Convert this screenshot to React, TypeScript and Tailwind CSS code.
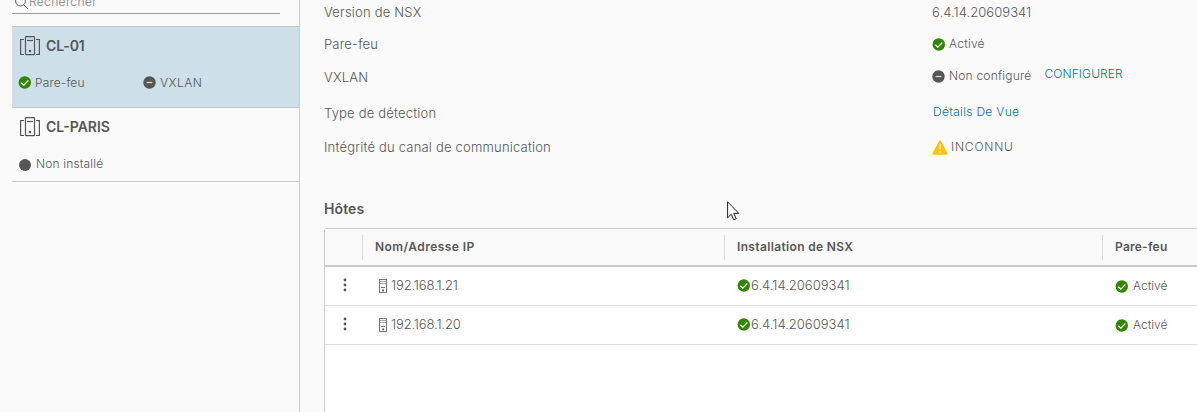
// Cluster list on the left, cluster details and host table on the right
const CheckIcon = ({ className = "" }: { className?: string }) => (
  <svg viewBox="0 0 13 13" className={`size-[13px] shrink-0 ${className}`}>
    <circle cx="6.8" cy="6.5" r="6.2" fill="#318700" />
    <path d="M3.3 6.7 5.8 9.1 10.4 4.5" fill="none" stroke="#fff" strokeWidth="1.25" />
  </svg>
);

const MinusIcon = ({ className = "" }: { className?: string }) => (
  <svg viewBox="0 0 13 13" className={`size-[13px] shrink-0 ${className}`}>
    <circle cx="6.5" cy="6.5" r="6.2" fill="#565656" />
    <path d="M3.6 6.5h5.8" stroke="#ddd" strokeWidth="1.2" />
  </svg>
);

const WarningIcon = () => (
  <svg viewBox="0 0 16 15" className="h-[15px] w-4 shrink-0">
    <path d="M8 1.6 14.6 13.8H1.4Z" fill="#ffc20e" stroke="#ffc20e" strokeWidth="2" strokeLinejoin="round" />
    <path d="M8 4.6v5M8 11v1.5" stroke="#fff" strokeWidth="1.3" />
  </svg>
);

const ClusterIcon = () => (
  <svg viewBox="0 0 20 20" className="size-5 shrink-0" fill="none" stroke="#565656" strokeWidth="1.2">
    <rect x="5.5" y=".6" width="9" height="18" rx="0.6" />
    <path d="M7 4.5h6" />
    <path d="M4 3.5H.6v15H4M16 3.5h3.4v15H16" />
    <path d="M8.9 15h2.2" strokeWidth="2.2" />
  </svg>
);

const HostIcon = () => (
  <svg viewBox="0 0 8 14" className="mt-[2px] h-[14px] w-2 shrink-0">
    <rect x=".5" y=".5" width="7" height="13" fill="#fff" stroke="#777" />
    <path d="M1 2.5h6M1 4.5h6" stroke="#aaa" />
    <path d="M2 8.5h4" stroke="#777" />
    <path d="M3.2 11.4h1.8" stroke="#555" strokeWidth="1.6" />
  </svg>
);

const hosts = [
  { ip: "192.168.1.21", version: "6.4.14.20609341" },
  { ip: "192.168.1.20", version: "6.4.14.20609341" },
];

const Sidebar = () => (
  <aside className="h-[412px] w-[300px] shrink-0 border-r border-[#ccc] pl-3">
    <div className="flex h-[14px] w-[268px] items-end border-b border-[#9a9a9a] pb-[3px] pl-[2px]">
      <svg viewBox="0 0 15 15" className="size-[15px] shrink-0" fill="none" stroke="#666" strokeWidth="1">
        <circle cx="6.5" cy="6" r="5" />
        <path d="m10 10 4 4" />
      </svg>
      <span className="text-[12px] leading-4 tracking-[0.35px] text-[#808080]">Rechercher</span>
    </div>

    <div className="mt-3 h-[82px] border-y border-[#c4cacd] bg-[#cddfe8] pl-2">
      <div className="flex h-[37px] items-center gap-[6px]">
        <ClusterIcon />
        <span className="text-[14px] font-semibold tracking-[-0.1px]">CL-01</span>
      </div>
      <div className="flex h-[37px] items-center">
        <div className="flex w-[124px] items-center gap-[3px]">
          <CheckIcon className="-ml-[2px]" />
          <span className="pl-px text-[12px] tracking-[0.15px]">Pare-feu</span>
        </div>
        <MinusIcon className="-ml-px" />
        <span className="ml-[4px] text-[12px] tracking-[0.5px]">VXLAN</span>
      </div>
    </div>

    <div className="h-[74px] border-b border-[#ccc] pl-2">
      <div className="flex h-[38px] items-center gap-[6px]">
        <ClusterIcon />
        <span className="text-[14px] font-semibold">CL-PARIS</span>
      </div>
      <div className="flex h-[35px] items-center gap-[5px]">
        <span className="mt-[2px] -ml-px size-[12px] rounded-full bg-[#565656]" />
        <span className="text-[12px] tracking-[0.15px]">Non installé</span>
      </div>
    </div>
  </aside>
);

const Details = () => (
  <section className="grid grid-cols-[608px_1fr] grid-rows-[24px_40px_26px_46px_22px] items-center text-[13px] tracking-[0.2px]">
    <span>Version de NSX</span>
    <span className="tracking-[0.05px]">6.4.14.20609341</span>

    <span className="pb-px">Pare-feu</span>
    <div className="flex items-center gap-1">
      <CheckIcon className="mt-px" />
      <span className="text-[12px]">Activé</span>
    </div>

    <span>VXLAN</span>
    <div className="flex items-center gap-1 pb-[3px]">
      <MinusIcon className="mt-[2px]" />
      <span className="text-[12px]">Non configuré</span>
      <a className="ml-[9px] pb-[3px] text-[12px] tracking-[0.1px] text-[#0072a3]">CONFIGURER</a>
    </div>

    <span>Type de détection</span>
    <a className="pb-[3px] pl-px text-[12px] tracking-[0.3px] text-[#0072a3]">Détails De Vue</a>

    <span>Intégrité du canal de communication</span>
    <div className="flex items-center gap-[3px]">
      <WarningIcon />
      <span className="text-[12px] tracking-[0.8px]">INCONNU</span>
    </div>
  </section>
);

const HostTable = () => (
  <div className="h-[184px] rounded-tl-[3px] border-t border-l border-[#ccc] bg-white">
    <div className="grid h-[38px] grid-cols-[38px_362px_378px_1fr] items-center border-b-2 border-[#ccc] bg-[#fafafa] text-[12px] font-semibold">
      <div className="h-[25px] border-r border-[#ddd]" />
      <div className="flex h-[25px] items-center border-r border-[#ddd] pl-3 tracking-[0.45px]">Nom/Adresse IP</div>
      <div className="flex h-[25px] items-center border-r border-[#ddd] pl-3 tracking-[0.35px]">Installation de NSX</div>
      <div className="pl-3 tracking-[0.25px]">Pare-feu</div>
    </div>
    {hosts.map((host) => (
      <div
        key={host.ip}
        className="grid h-[39px] grid-cols-[38px_362px_378px_1fr] items-center border-b border-[#ddd] text-[13px]"
      >
        <svg viewBox="0 0 4 14" className="mb-[3px] ml-[18px] h-[14px] w-1" fill="#565656">
          <circle cx="2" cy="2" r="1.4" />
          <circle cx="2" cy="7" r="1.4" />
          <circle cx="2" cy="12" r="1.4" />
        </svg>
        <div className="flex items-center gap-1 pb-[2px] pl-4">
          <HostIcon />
          <span className="tracking-[-0.15px]">{host.ip}</span>
        </div>
        <div className="flex items-center gap-px pb-[2px] pl-3">
          <CheckIcon />
          <span>{host.version}</span>
        </div>
        <div className="flex items-center gap-[5px] pl-3">
          <CheckIcon />
          <span className="text-[12px]">Activé</span>
        </div>
      </div>
    ))}
  </div>
);

const Pointer = () => (
  <svg viewBox="0 0 13 20" className="absolute top-[201px] left-[727px] h-5 w-[13px]">
    <path d="M.6 .8v16l3.7-3.5 2.4 5.5 2.5-1.1-2.4-5.3h5Z" fill="#fff" stroke="#1b1b2b" />
  </svg>
);

export default function App() {
  return (
    <div className="relative flex h-[412px] w-full overflow-hidden bg-[#fafafa] font-['Inter','Open_Sans',sans-serif] leading-5 font-light whitespace-nowrap text-[#565656]">
      <Sidebar />
      <main className="min-w-0 flex-1 pl-6">
        <Details />
        <h2 className="mt-[41px] mb-[9px] text-[14px] leading-5 font-semibold tracking-[0.1px]">Hôtes</h2>
        <HostTable />
      </main>
      <Pointer />
    </div>
  );
}
